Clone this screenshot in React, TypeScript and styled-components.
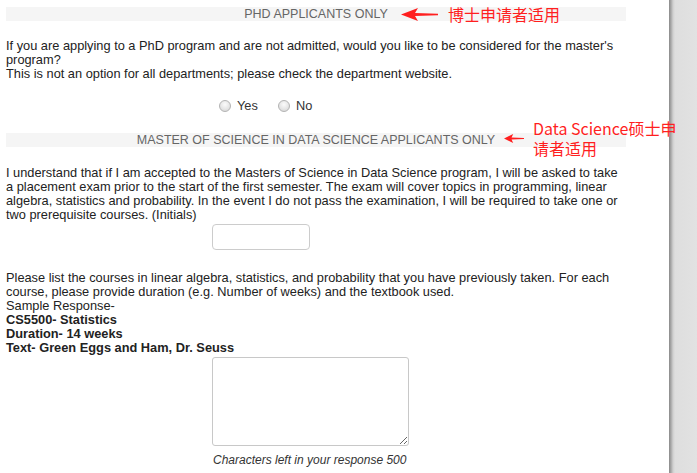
import styled, { createGlobalStyle } from "styled-components";

const GlobalStyle = createGlobalStyle`
  html,
  body {
    margin: 0;
    padding: 0;
    background: #fff;
  }

  body {
    font-family: "Liberation Sans", Arial, sans-serif;
  }
`;

const Page = styled.div`
  position: relative;
  display: flex;
  height: 473px;
  overflow: hidden;
`;

const Main = styled.main`
  flex: 0 0 669px;
  box-sizing: border-box;
  padding: 7px 0 0 6px;
`;

const Column = styled.div`
  width: 620px;
`;

const Gutter = styled.div`
  flex: 1;
  background: linear-gradient(
    to right,
    #8a8a8a 0,
    #a8a8a8 2px,
    #cfcfcf 4px,
    #dedede 6px,
    #e2e2e2 100%
  );
`;

const SectionBar = styled.h3<{ $gap?: number }>`
  margin: ${(p) => p.$gap ?? 0}px 0 0;
  height: 14px;
  line-height: 14px;
  background: #f5f5f5;
  color: #666;
  font-size: 12.5px;
  font-weight: 400;
  text-align: center;
  text-transform: uppercase;
`;

const Paragraph = styled.p<{ $gap: number }>`
  margin: ${(p) => p.$gap}px 0 0;
  font-size: 12.8px;
  line-height: 14px;
  color: #222;

  b {
    font-weight: 700;
  }
`;

const ControlRow = styled.div<{ $gap: number }>`
  display: flex;
  align-items: center;
  margin-top: ${(p) => p.$gap}px;
  padding-left: 206px;
  font-size: 12.8px;
  line-height: 14px;
  color: #333;
`;

const RadioOption = styled.label`
  display: flex;
  align-items: center;
  margin-right: 13px;
`;

const RadioInput = styled.input.attrs({ type: "radio" })`
  appearance: none;
  box-sizing: border-box;
  width: 12px;
  height: 12px;
  margin: 0 6px 0 7px;
  border: 1px solid #b3b3b3;
  border-radius: 50%;
  background: radial-gradient(circle at 50% 35%, #fbfbfb 0, #e6e6e6 55%, #d2d2d2 100%);
`;

const TextInput = styled.input.attrs({ type: "text" })`
  box-sizing: border-box;
  width: 98px;
  height: 26px;
  margin: 0;
  border: 1px solid #ccc;
  border-radius: 4px;
  background: #fff;
`;

const TextArea = styled.textarea`
  box-sizing: border-box;
  width: 197px;
  height: 89px;
  margin: 0;
  border: 1px solid #c8c8c8;
  border-radius: 3px;
  background: #fff;
`;

const CharCount = styled.div`
  margin-top: 7px;
  padding-left: 207px;
  font-size: 12px;
  line-height: 14px;
  font-style: italic;
  color: #333;
`;

const Annotation = styled.div<{ $left: number; $top: number }>`
  position: absolute;
  left: ${(p) => p.$left}px;
  top: ${(p) => p.$top}px;
  display: flex;
  align-items: center;
  gap: ${(p) => (p.$left > 450 ? 9 : 10)}px;
  color: #ff1f1f;
  font-family: "Noto Sans CJK SC", "Liberation Sans", sans-serif;
  font-size: 16px;
  line-height: 20px;
  white-space: nowrap;
`;

function Arrow({ width, height }: { width: number; height: number }) {
  return (
    <svg width={width} height={height} viewBox="0 0 37 13" preserveAspectRatio="none">
      <polygon points="0,6.5 17,0 14,5 37,5.8 37,7.2 14,8 17,13" fill="#ff1f1f" />
    </svg>
  );
}

export default function App() {
  return (
    <>
      <GlobalStyle />
      <Page>
        <Main>
          <Column>
            <SectionBar>PhD Applicants Only</SectionBar>
            <Paragraph $gap={18}>
              If you are applying to a PhD program and are not admitted, would you like to be
              considered for the master's program?
              <br />
              This is not an option for all departments; please check the department website.
            </Paragraph>
            <ControlRow $gap={18}>
              <RadioOption>
                <RadioInput name="phd-masters" />
                Yes
              </RadioOption>
              <RadioOption>
                <RadioInput name="phd-masters" />
                No
              </RadioOption>
            </ControlRow>

            <SectionBar $gap={20}>Master of Science in Data Science Applicants Only</SectionBar>
            <Paragraph $gap={19}>
              I understand that if I am accepted to the Masters of Science in Data Science program,
              I will be asked to take a placement exam prior to the start of the first semester. The
              exam will cover topics in programming, linear algebra, statistics and probability. In
              the event I do not pass the examination, I will be required to take one or two
              prerequisite courses. (Initials)
            </Paragraph>
            <ControlRow $gap={2}>
              <TextInput />
            </ControlRow>

            <Paragraph $gap={21}>
              Please list the courses in linear algebra, statistics, and probability that you have
              previously taken. For each course, please provide duration (e.g. Number of weeks) and
              the textbook used.
              <br />
              Sample Response-
              <br />
              <b>CS5500- Statistics</b>
              <br />
              <b>Duration- 14 weeks</b>
              <br />
              <b>Text- Green Eggs and Ham, Dr. Seuss</b>
            </Paragraph>
            <ControlRow $gap={2}>
              <TextArea />
            </ControlRow>
            <CharCount>Characters left in your response 500</CharCount>
          </Column>
        </Main>
        <Gutter />

        <Annotation $left={401} $top={4}>
          <Arrow width={37} height={13} />
          <span>博士申请者适用</span>
        </Annotation>
        <Annotation $left={504} $top={118}>
          <Arrow width={20} height={9} />
          <span>
            Data Science硕士申
            <br />
            请者适用
          </span>
        </Annotation>
      </Page>
    </>
  );
}
